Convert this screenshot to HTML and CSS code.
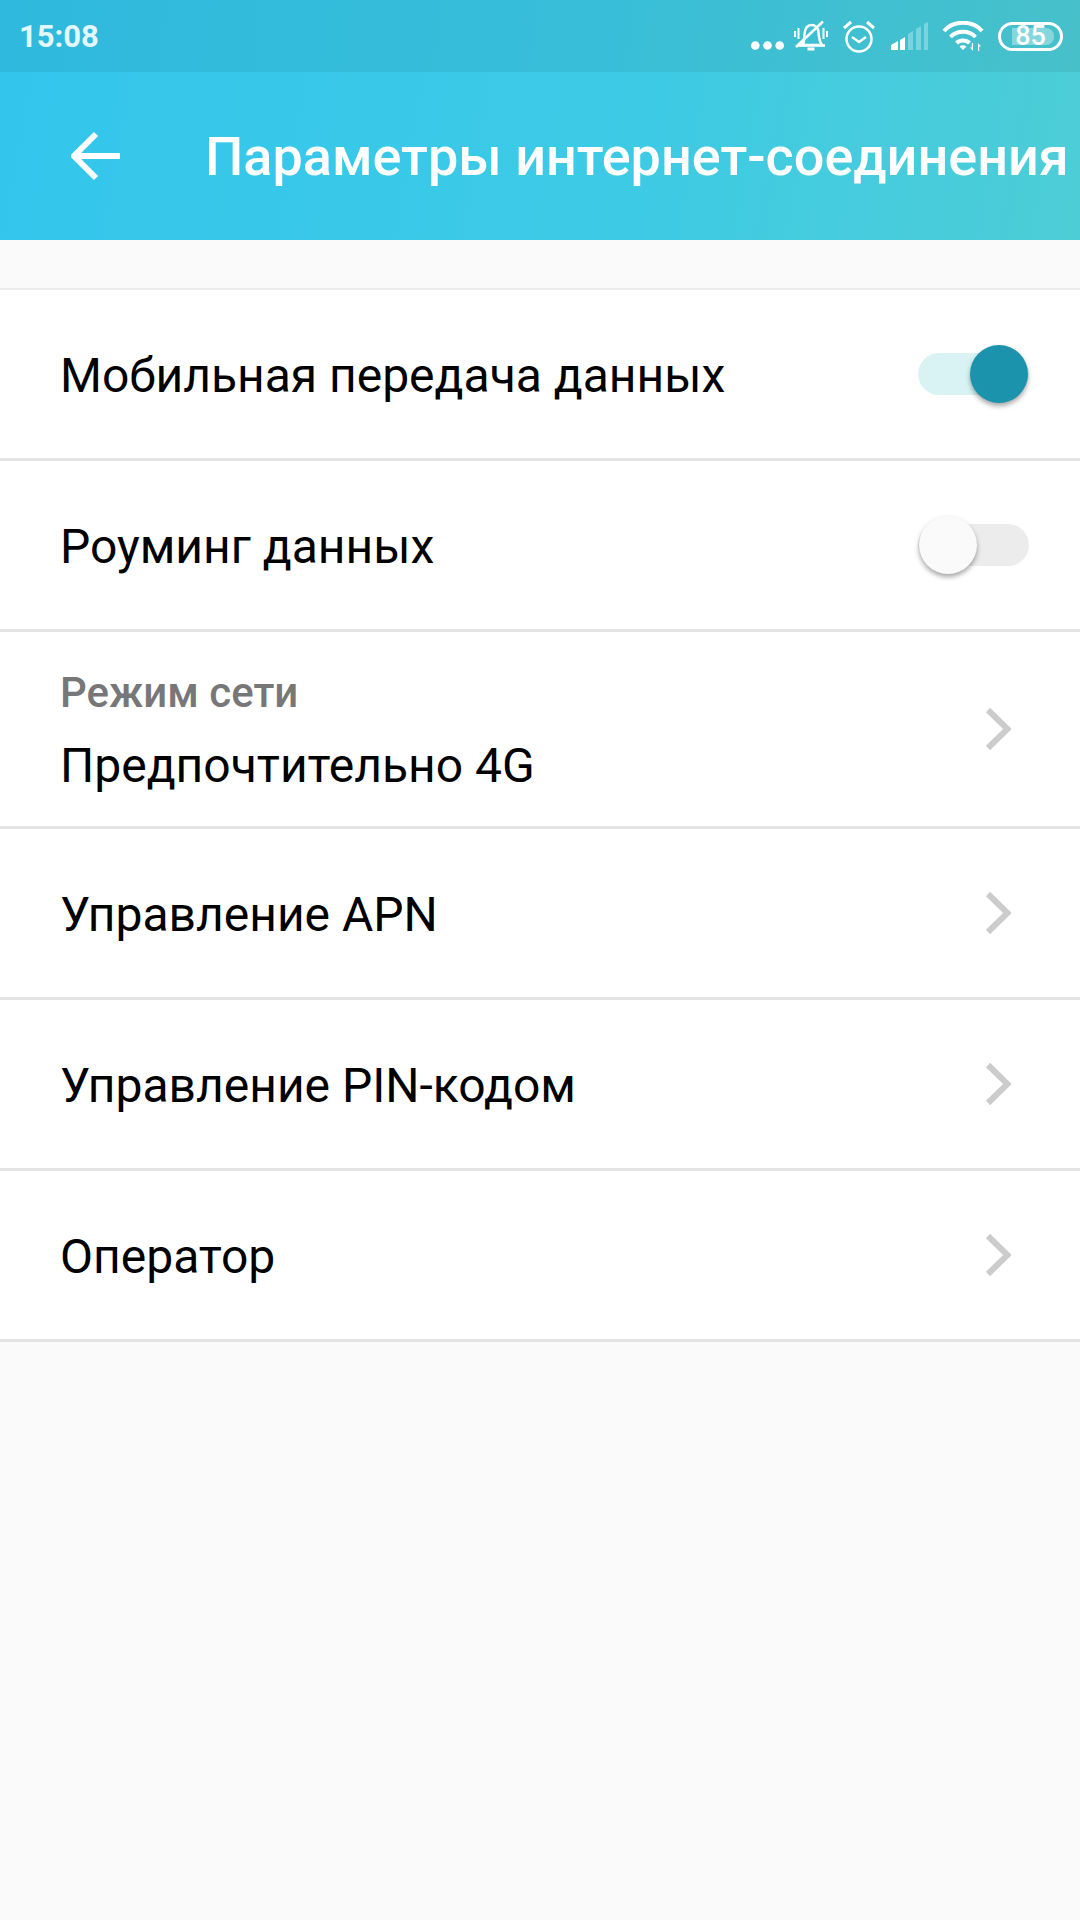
FILE: index.html
```html
<!DOCTYPE html>
<html lang="ru">
<head>
    <meta charset="UTF-8">
    <meta name="viewport" content="width=device-width, initial-scale=1.0">
    <title>Параметры интернет-соединения</title>
    <link rel="stylesheet" href="styles.css">
</head>
<body>

    <div class="top-area">
        <div class="status-bar">
            <span class="clock">15:08</span>
            <div class="status-icons">
                <svg class="ic-dots" width="33" height="9" viewBox="0 0 33 9"><circle cx="4.300" cy="4.500" r="4.300"/><circle cx="16.500" cy="4.500" r="4.300"/><circle cx="28.700" cy="4.500" r="4.300"/></svg>
                <svg class="ic-line" width="34" height="32" viewBox="0 0 34 32">
                    <path d="M8 25c3-3 2-6 2.500-11C11 8 14 5 17.500 5 21 5 24 7.500 24.500 12c.4 5 .4 9 3.500 13z"/>
                    <path d="M3 25.500H31"/>
                    <path d="M13.500 29h7" stroke-width="3"/>
                    <path d="M2 27L29 1.500" stroke-width="2.500"/>
                    <path d="M1 11v6M4.500 8v11M29.500 8v11M33 11v6" stroke-width="2"/>
                </svg>
                <svg class="ic-line" width="34" height="33" viewBox="0 0 34 33">
                    <circle cx="17" cy="19" r="12.500"/>
                    <path d="M10 17l7 5 7-5"/>
                    <path d="M2 8l7-6M32 8l-7-6" stroke-width="3"/>
                </svg>
                <svg width="39" height="28" viewBox="0 0 39 28">
                    <path d="M1 28v-5l7-4v9z"/>
                    <path d="M10 28V18l5-3v13z"/>
                    <path class="dim" d="M18 28V12l5-3v19z"/>
                    <path class="dim" d="M26 28V7l5-3v24z"/>
                    <path class="dim" d="M34 28V2l4-2v28z"/>
                </svg>
                <svg class="ic-wifi" width="42" height="30" viewBox="0 0 42 30">
                    <path class="wifi-arcs" d="M2 10C11-1 31-1 40 10M8.500 16c6.500-7 18.500-7 25 0M14.500 22c3.500-3.500 9.500-3.500 13 0" />
                    <path d="M17.500 25.500c2-1.800 5-1.800 7 0L21 29z"/>
                    <path d="M31 22v8l-3-3.500h1.800V22zM36 30v-8l3 3.500h-1.800V30z" />
                </svg>
                <div class="battery">
                    <div class="battery-level"></div>
                    <span class="battery-num">85</span>
                </div>
            </div>
        </div>
        <header class="app-bar">
            <svg class="back-icon" width="50" height="50" viewBox="0 0 50 50"><path d="M49 25H3M25 3L3 25l22 22"/></svg>
            <h1>Параметры интернет-соединения</h1>
        </header>
    </div>

    <section class="settings-list">
        <div class="row">
            <span class="row-label">Мобильная передача данных</span>
            <div class="switch switch-on"><div class="switch-knob"></div></div>
        </div>
        <div class="row">
            <span class="row-label">Роуминг данных</span>
            <div class="switch"><div class="switch-knob"></div></div>
        </div>
        <div class="row row-tall">
            <div class="row-text">
                <span class="row-caption">Режим сети</span>
                <span class="row-label">Предпочтительно 4G</span>
            </div>
            <svg class="chevron" width="26" height="44" viewBox="0 0 26 44"><path d="M3 3l19.500 19L3 41"/></svg>
        </div>
        <div class="row">
            <span class="row-label">Управление APN</span>
            <svg class="chevron" width="26" height="44" viewBox="0 0 26 44"><path d="M3 3l19.500 19L3 41"/></svg>
        </div>
        <div class="row">
            <span class="row-label">Управление PIN-кодом</span>
            <svg class="chevron" width="26" height="44" viewBox="0 0 26 44"><path d="M3 3l19.500 19L3 41"/></svg>
        </div>
        <div class="row">
            <span class="row-label">Оператор</span>
            <svg class="chevron" width="26" height="44" viewBox="0 0 26 44"><path d="M3 3l19.500 19L3 41"/></svg>
        </div>
    </section>

</body>
</html>
```

FILE: styles.css
```css
/* Global Styles */
body {
    font-family: Roboto, "Noto Sans", sans-serif;
    margin: 0;
    padding: 0;
    width: 1080px;
    height: 1920px;
    overflow: hidden;
    background-color: #fafafa;
    color: #000;
}

.top-area {
    background: linear-gradient(100deg, #33c5ec 0%, #3ccae6 55%, #4dcdd6 100%);
}

.status-bar {
    height: 72px;
    display: flex;
    align-items: center;
    justify-content: space-between;
    padding: 0 17px 0 19px;
    background-color: rgba(0, 0, 0, 0.06);
}

.clock {
    color: #e4f7fb;
    font-size: 31px;
    font-weight: 700;
}

.status-icons {
    display: flex;
    align-items: center;
    gap: 14px;
    fill: #fff;
}

.ic-dots {
    margin-top: 18px;
    margin-right: -4px;
}

.ic-line {
    fill: none;
    stroke: #fff;
    stroke-width: 2.500;
}

.status-icons .dim {
    opacity: 0.3;
}

.ic-wifi {
    margin-left: -1px;
}

.status-icons .wifi-arcs {
    fill: none;
    stroke: #fff;
    stroke-width: 4;
}

.battery {
    position: relative;
    width: 65px;
    height: 29px;
    box-sizing: border-box;
    border: 3px solid #fff;
    border-radius: 15px;
    display: flex;
    align-items: center;
    justify-content: center;
}

.battery-level {
    position: absolute;
    left: 11px;
    top: 3px;
    bottom: 3px;
    right: 6px;
    border-radius: 0 8px 8px 0;
    background-color: rgba(255, 255, 255, 0.35);
}

.battery-num {
    position: relative;
    color: #fff;
    font-size: 27px;
    font-weight: 500;
    line-height: 1;
}

.app-bar {
    height: 168px;
    display: flex;
    align-items: center;
    padding-left: 71px;
    box-sizing: border-box;
}

.back-icon {
    flex: none;
    fill: none;
    stroke: #fff;
    stroke-width: 6;
}

.app-bar h1 {
    margin: 0 0 0 84px;
    color: #fff;
    font-size: 54px;
    font-weight: 500;
    white-space: nowrap;
}

.settings-list {
    margin-top: 48px;
    background-color: #fff;
    border-top: 2px solid #ececec;
}

.row {
    height: 168px;
    display: flex;
    align-items: center;
    justify-content: space-between;
    padding: 0 51px 0 60px;
    border-bottom: 3px solid #e4e4e4;
}

.row-tall {
    height: 194px;
}

.row > .row-label,
.row-text {
    padding-top: 3px;
}

.row-text {
    display: flex;
    flex-direction: column;
    gap: 20px;
}

.row-label {
    font-size: 48px;
    line-height: 56px;
}

.row-caption {
    color: #777;
    font-size: 42px;
    font-weight: 500;
    line-height: 50px;
}

.chevron {
    fill: none;
    stroke: #cccccc;
    stroke-width: 6;
    margin-right: 18px;
}

.switch {
    position: relative;
    width: 111px;
    height: 42px;
    border-radius: 21px;
    background-color: #ececec;
}

.switch-on {
    background-color: #d9f3f5;
}

.switch-knob {
    position: absolute;
    left: 1px;
    top: -8px;
    width: 58px;
    height: 58px;
    border-radius: 50%;
    background-color: #fafafa;
    box-shadow: 0 3px 5px rgba(0, 0, 0, 0.35);
}

.switch-on .switch-knob {
    left: 52px;
    background-color: #1c93ad;
}
```
